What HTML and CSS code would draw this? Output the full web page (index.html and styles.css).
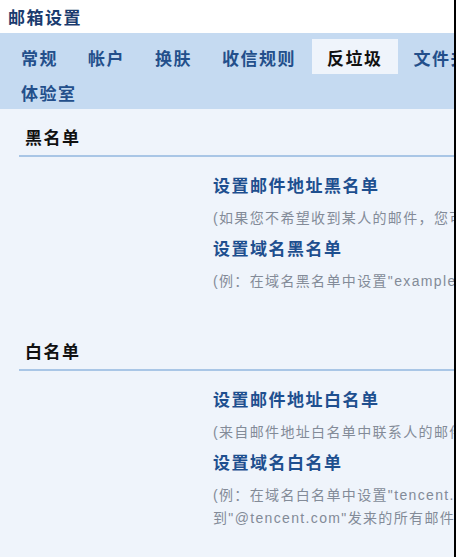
FILE: index.html
```html
<!DOCTYPE html>
<html lang="zh-CN">
<head>
<meta charset="utf-8">
<title>邮箱设置</title>
<link rel="stylesheet" href="styles.css">
</head>
<body>
<div class="frame">
  <div class="title">邮箱设置</div>
  <div class="nav">
    <div class="nav-row">
      <a class="tab">常规</a>
      <a class="tab">帐户</a>
      <a class="tab">换肤</a>
      <a class="tab">收信规则</a>
      <a class="tab active">反垃圾</a>
      <a class="tab">文件夹</a>
    </div>
    <div class="nav-row">
      <a class="tab">体验室</a>
    </div>
  </div>
  <div class="content">
    <div class="section">
      <h2 class="sec-head">黑名单</h2>
      <div class="items">
        <div class="item">
          <a class="link">设置邮件地址黑名单</a>
          <p class="desc">(如果您不希望收到某人的邮件，您可以把他的邮件地址加入黑名单)</p>
        </div>
        <div class="item">
          <a class="link">设置域名黑名单</a>
          <p class="desc">(例：在域名黑名单中设置"example.com"，则不会收到"@example.com"发来的任何邮件)</p>
        </div>
      </div>
    </div>
    <div class="section">
      <h2 class="sec-head">白名单</h2>
      <div class="items">
        <div class="item">
          <a class="link">设置邮件地址白名单</a>
          <p class="desc">(来自邮件地址白名单中联系人的邮件，将不会被当作垃圾邮件)</p>
        </div>
        <div class="item">
          <a class="link">设置域名白名单</a>
          <p class="desc">(例：在域名白名单中设置"tencent.com"，则可以收<br>到"@tencent.com"发来的所有邮件)</p>
        </div>
      </div>
    </div>
  </div>
</div>
</body>
</html>
```

FILE: styles.css
```css
html, body {
  margin: 0;
  padding: 0;
  background: #eff4fb;
}
.frame {
  width: 456px;
  height: 557px;
  box-sizing: border-box;
  border-right: 2px solid #000;
  overflow: hidden;
  background: #eff4fb;
  font-family: "Noto Sans CJK SC", "Noto Sans", sans-serif;
}
.title {
  height: 33px;
  line-height: 33px;
  background: #fff;
  padding-left: 8px;
  font-size: 17px;
  font-weight: bold;
  color: #1a3b6e;
  letter-spacing: 1.5px;
  white-space: nowrap;
}
.nav {
  background: #c5daf1;
  padding: 6px 0 0 7px;
  height: 76px;
  box-sizing: border-box;
}
.nav-row {
  display: flex;
  gap: 2px;
  white-space: nowrap;
}
.tab {
  display: block;
  height: 35px;
  line-height: 37px;
  padding: 0 14px;
  font-size: 17px;
  font-weight: bold;
  letter-spacing: 1.5px;
  color: #234f8b;
  flex: none;
}
.tab.active {
  background: #eff4fb;
  color: #111;
  padding: 0 15px;
}
.content {
  padding-top: 16px;
}
.section {
  margin-bottom: 46px;
}
.sec-head {
  margin: 0 0 0 19px;
  padding: 0 0 6px 6px;
  font-size: 17px;
  line-height: 24px;
  font-weight: bold;
  letter-spacing: 1.5px;
  color: #111;
  border-bottom: 2px solid #a9c6e6;
  width: 600px;
}
.items {
  padding: 16px 0 0 213px;
  display: flex;
  flex-direction: column;
  gap: 6px;
}
.item {
  display: flex;
  flex-direction: column;
  gap: 10px;
}
.link {
  display: block;
  font-size: 17px;
  line-height: 24px;
  font-weight: bold;
  letter-spacing: 1.5px;
  color: #1e4f8f;
  white-space: nowrap;
}
.desc {
  margin: 0;
  font-family: "Liberation Sans", "Noto Sans CJK SC", sans-serif;
  font-size: 14px;
  line-height: 23px;
  letter-spacing: 1.35px;
  color: #838b98;
  white-space: nowrap;
}
```
